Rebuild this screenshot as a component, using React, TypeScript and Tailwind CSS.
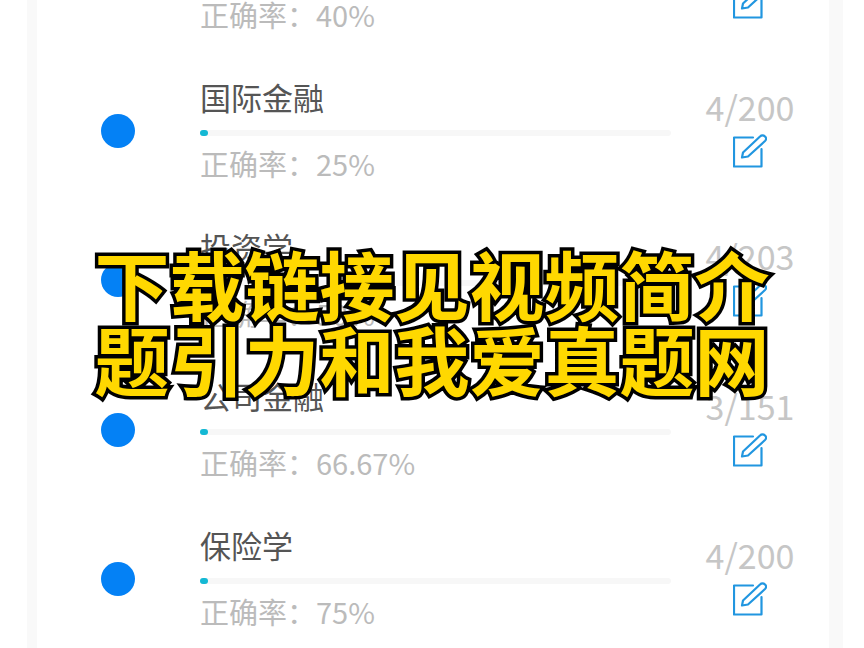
const rows = [
  { name: "货币银行学", rate: "40%", count: "2/200" },
  { name: "国际金融", rate: "25%", count: "4/200" },
  { name: "投资学", rate: "50%", count: "4/203" },
  { name: "公司金融", rate: "66.67%", count: "3/151" },
  { name: "保险学", rate: "75%", count: "4/200" },
];

function EditIcon() {
  return (
    <svg width="34" height="34" viewBox="0 0 34 34" fill="none" stroke="#2196e0" strokeWidth="2.2" strokeLinejoin="round" strokeLinecap="round">
      <path d="M20 3.5H1V32.5H28.5V15" />
      <path d="M9 23.5L10 18.5L27 2.5C28.5 1 30.5 1 32 2.5C33.5 4 33.5 5.5 32 7L15 22.5Z" />
    </svg>
  );
}

function Row({ name, rate, count }: { name: string; rate: string; count: string }) {
  return (
    <div className="flex h-[149.33px] items-center">
      <div className="mb-[2px] ml-[64px] h-[34px] w-[34px] shrink-0 rounded-full bg-[#0481f5]" />
      <div className="ml-[65px] w-[471px] shrink-0 pb-[3px]">
        <div className="h-[44px] text-[31px] leading-[44px] text-[#555555]">{name}</div>
        <div className="mt-[11px] h-[6px] rounded-full bg-[#f7f7f7]">
          <div className="h-[6px] w-[8px] rounded-full bg-[#14b8d4]" />
        </div>
        <div className="mt-[5px] h-[44px] text-[29px] leading-[44px] text-[#bbbbbb]">正确率：{rate}</div>
      </div>
      <div className="ml-[29px] flex w-[100px] shrink-0 flex-col items-center pb-[8px]">
        <div className="h-[38px] text-[34px] leading-[38px] text-[#c6c6c6]">{count}</div>
        <div className="mt-[8px] h-[34px] w-[34px]">
          <EditIcon />
        </div>
      </div>
    </div>
  );
}

export default function App() {
  return (
    <div className="relative h-[648px] w-[864px] overflow-hidden bg-white font-['Noto_Sans_CJK_SC','Noto_Sans',sans-serif]">
      <div className="ml-[27px] mr-[21px] flex h-full flex-col border-l-[10px] border-r-[14px] border-l-[#f9f9f9] border-r-[#f9f9f9]">
        <div className="-mt-[92px]">
          {rows.map((r) => (
            <Row key={r.name} {...r} />
          ))}
        </div>
      </div>
      <div className="absolute inset-x-0 top-[245px] text-center text-[75px] font-bold leading-[75px] text-[#ffd800] [-webkit-text-stroke:7px_#000000] [paint-order:stroke_fill]">
        <div>下载链接见视频简介</div>
        <div>题引力和我爱真题网</div>
      </div>
    </div>
  );
}
